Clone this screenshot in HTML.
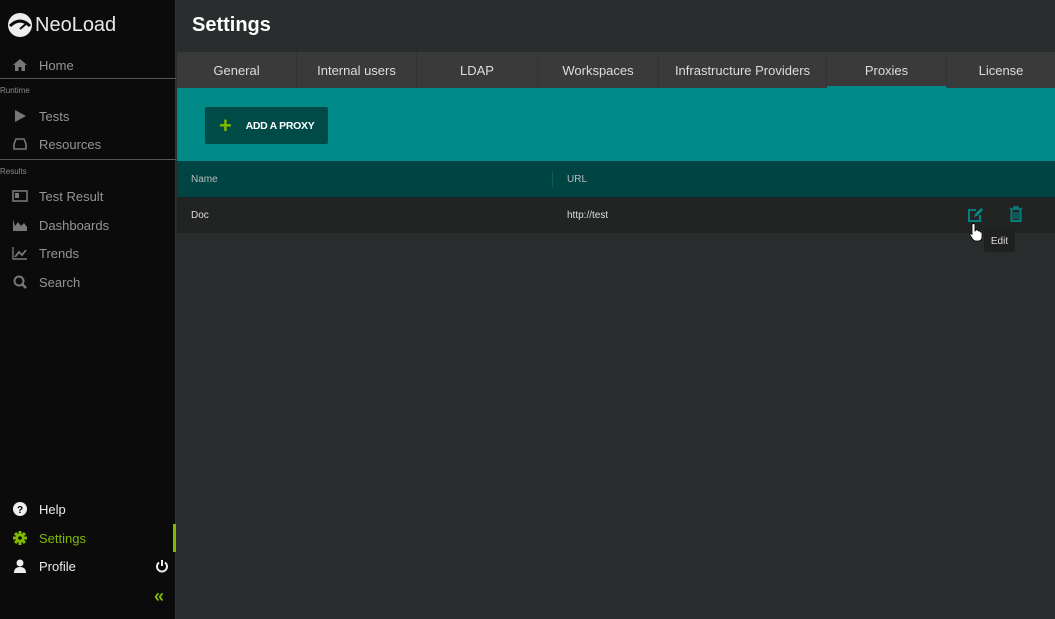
<!DOCTYPE html>
<html><head><style>
*{margin:0;padding:0;box-sizing:border-box}
body{width:1055px;height:619px;overflow:hidden;background:#2a2d2e;font-family:"Liberation Sans",sans-serif;position:relative}
#sb{position:absolute;left:0;top:0;width:176px;height:619px;background:#0b0b0b;border-right:1px solid #333}
.it{position:absolute;left:12px;height:20px;display:flex;align-items:center;color:#959595;font-size:13px}
.it svg{width:16px;height:16px;margin-right:11px}
.sec{position:absolute;left:0;font-size:8px;color:#8a8a8a}
.hr{position:absolute;left:0;width:176px;height:1px;background:#555}
#main{position:absolute;left:177px;top:0;right:0;bottom:0}
h1{position:absolute;left:15px;top:14px;color:#fff;font-size:20px;font-weight:bold}
#tabs{position:absolute;top:52px;left:0;right:0;height:36px;background:#3a3a3a;display:flex}
.tab{flex-shrink:0;height:36px;color:#ddd;font-size:13px;display:flex;align-items:center;justify-content:center;border-right:1px solid #333}
#teal{position:absolute;top:88px;left:0;right:0;height:73px;background:#008a87}
#btn{position:absolute;left:28px;top:19px;width:123px;height:37px;background:#004a48;border-radius:2px;color:#fff;font-size:10.5px;font-weight:bold;display:flex;align-items:center;letter-spacing:-0.3px}
#th{position:absolute;top:161px;left:0;right:0;height:36px;background:#004444;color:#bbb;font-size:10px}
#row{position:absolute;top:197px;left:0;right:0;height:36px;background:#222424;color:#ddd;font-size:10px}
</style></head><body>
<div id="sb">
 <div style="position:absolute;left:7px;top:12px;display:flex;align-items:center;color:#e8e8e8;font-size:20px">
  <svg width="26" height="26" viewBox="0 0 26 26"><circle cx="13" cy="13" r="12" fill="#eee"/><path d="M3 14 Q13 4 23 14" stroke="#0b0b0b" stroke-width="3" fill="none"/><path d="M13 17 L20 11" stroke="#0b0b0b" stroke-width="2"/></svg><span style="margin-left:2px">NeoLoad</span></div>
 <div class="it" style="top:55px"><svg viewBox="0 0 16 16"><path d="M8 2 L1 8 H3 V14 H6.5 V10 H9.5 V14 H13 V8 H15Z" fill="#777"/></svg>Home</div>
 <div class="hr" style="top:78px"></div>
 <div class="sec" style="top:86px">Runtime</div>
 <div class="it" style="top:106px"><svg viewBox="0 0 16 16"><path d="M3 2 L14 8 L3 14Z" fill="#777"/></svg>Tests</div>
 <div class="it" style="top:134px"><svg viewBox="0 0 16 16"><path d="M2 8 L4 3 H12 L14 8 V13 H2Z" fill="none" stroke="#777" stroke-width="1.6"/></svg>Resources</div>
 <div class="hr" style="top:159px"></div>
 <div class="sec" style="top:167px">Results</div>
 <div class="it" style="top:186px"><svg viewBox="0 0 16 16"><rect x="1" y="3" width="14" height="10" fill="none" stroke="#777" stroke-width="1.6"/><rect x="3" y="5" width="4" height="5" fill="#777"/></svg>Test Result</div>
 <div class="it" style="top:215px"><svg viewBox="0 0 16 16"><path d="M1 2 V14 H15 V10 L12 6 L9 9 L6 5 L3 9Z" fill="#777"/></svg>Dashboards</div>
 <div class="it" style="top:243px"><svg viewBox="0 0 16 16"><path d="M1 2 V14 H15" fill="none" stroke="#777" stroke-width="1.4"/><path d="M3 12 L7 7 L10 10 L14 5" fill="none" stroke="#777" stroke-width="1.8"/></svg>Trends</div>
 <div class="it" style="top:272px"><svg viewBox="0 0 16 16"><circle cx="7" cy="7" r="4.5" fill="none" stroke="#777" stroke-width="2"/><path d="M10 10 L14 14" stroke="#777" stroke-width="2.5"/></svg>Search</div>
 <div class="it" style="top:499px;color:#eee"><svg viewBox="0 0 16 16"><circle cx="8" cy="8" r="7" fill="#eee"/><text x="8" y="12" font-size="10" font-weight="bold" text-anchor="middle" fill="#000" font-family="Liberation Sans">?</text></svg>Help</div>
 <div class="it" style="top:528px;color:#7fba00"><svg viewBox="0 0 16 16"><g fill="#7fba00"><rect x="6.5" y="1" width="3" height="14"/><rect x="1" y="6.5" width="14" height="3"/><rect x="6.5" y="1" width="3" height="14" transform="rotate(45 8 8)"/><rect x="6.5" y="1" width="3" height="14" transform="rotate(-45 8 8)"/><circle cx="8" cy="8" r="4.5"/></g><circle cx="8" cy="8" r="1.8" fill="#0b0b0b"/></svg>Settings</div>
 <div style="position:absolute;left:173px;top:524px;width:3px;height:28px;background:#7fba00"></div>
 <div class="it" style="top:556px;color:#eee"><svg viewBox="0 0 16 16"><circle cx="8" cy="5" r="3.5" fill="#eee"/><path d="M2 15 Q2 9 8 9 Q14 9 14 15Z" fill="#eee"/></svg>Profile</div>
 <svg style="position:absolute;left:155px;top:559px" width="14" height="14" viewBox="0 0 14 14"><path d="M4 3.5 A5 5 0 1 0 10 3.5" fill="none" stroke="#eee" stroke-width="2"/><path d="M7 1 V7" stroke="#eee" stroke-width="2"/></svg>
 <div style="position:absolute;left:154px;top:586px;color:#7fba00;font-size:18px;font-weight:bold">«</div>
</div>
<div id="main">
 <h1>Settings</h1>
 <div id="tabs">
  <div class="tab" style="width:120px">General</div>
  <div class="tab" style="width:120px">Internal users</div>
  <div class="tab" style="width:121px">LDAP</div>
  <div class="tab" style="width:121px">Workspaces</div>
  <div class="tab" style="width:168px">Infrastructure Providers</div>
  <div class="tab" style="width:120px;border-bottom:2px solid #008a87;padding-top:2px">Proxies</div>
  <div class="tab" style="flex:1;border-right:none">License</div>
 </div>
 <div id="teal"><div id="btn"><span style="color:#7fba00;font-size:22px;margin:0 14px 0 14px;font-weight:bold;line-height:1">+</span>ADD A PROXY</div></div>
 <div id="th"><span style="position:absolute;left:14px;top:13px">Name</span><div style="position:absolute;left:375px;top:10px;width:1px;height:16px;background:#0a5a58"></div><span style="position:absolute;left:390px;top:13px">URL</span></div>
 <div id="row"><span style="position:absolute;left:14px;top:13px">Doc</span><span style="position:absolute;left:390px;top:13px">http://test</span>
  <svg style="position:absolute;left:790px;top:10px" width="17" height="16" viewBox="0 0 17 16"><path d="M9 3 H2 V14 H13 V8" fill="none" stroke="#008a87" stroke-width="1.8"/><path d="M7 10 L8 7 L14 1 L16 3 L10 9Z" fill="#008a87"/></svg>
  <svg style="position:absolute;left:832px;top:9px" width="14" height="16" viewBox="0 0 14 16"><path d="M1 3 H13 M5 3 V1 H9 V3" fill="none" stroke="#008a87" stroke-width="1.6"/><path d="M2.5 4 V15 H11.5 V4" fill="none" stroke="#008a87" stroke-width="1.8"/><path d="M5 6 V13 M7 6 V13 M9 6 V13" stroke="#008a87" stroke-width="1"/></svg>
 </div>
 <div style="position:absolute;left:807px;top:230px;width:31px;height:22px;background:#1f2020;border-radius:2px;color:#ddd;font-size:10px;display:flex;align-items:center;justify-content:center">Edit</div>
 <svg style="position:absolute;left:792px;top:223px" width="14" height="19" viewBox="0 0 14 19"><path d="M3 2 Q3 0.5 4.5 0.5 Q6 0.5 6 2 V8 L7 7 Q9 6.5 9.5 8 Q11 7.5 11.5 9 Q13 8.8 13 10.5 V14 Q13 18 9 18 H7 Q5 18 3.5 16 L1 12 Q0.5 10.5 2 10.5 L3 11.5Z" fill="#fff" stroke="#000" stroke-width="0.8"/></svg>
</div>
</body></html>
